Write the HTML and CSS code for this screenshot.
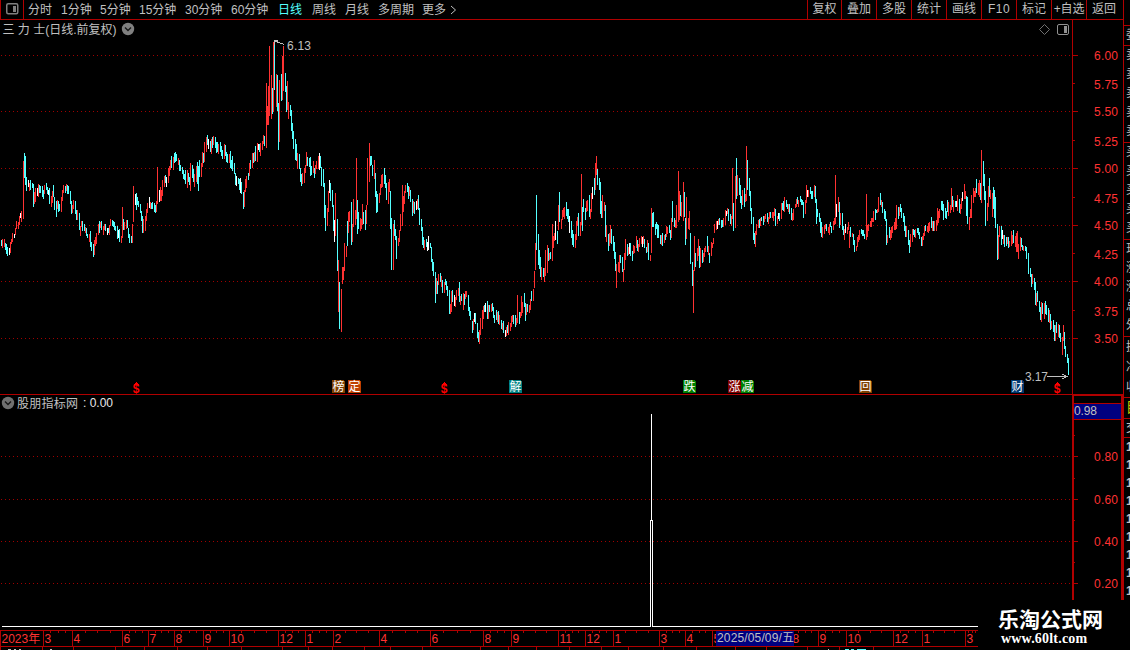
FILE: index.html
```html
<!DOCTYPE html>
<html lang="zh-CN">
<head>
<meta charset="utf-8">
<title>三力士 日线</title>
<link rel="stylesheet" href="styles.css">
</head>
<body>
<div class="terminal">
  <main class="workspace">
    <nav class="toolbar">
      <span class="pane-toggle"><svg width="13" height="12" viewBox="0 0 13 12"><rect x=".75" y=".75" width="11" height="10" rx="1.5" fill="none" stroke="#808080" stroke-width="1.5"/><rect x="7" y="3" width="3" height="6" fill="#808080"/></svg></span>
      <div class="periods">
        <span>分时</span><span>1分钟</span><span>5分钟</span><span>15分钟</span><span>30分钟</span><span>60分钟</span><span class="active">日线</span><span>周线</span><span>月线</span><span>多周期</span><span>更多</span><svg width="7" height="10" viewBox="0 0 7 10"><path d="M1 1L5.5 5L1 9" fill="none" stroke="#c0c0c0"/></svg>
      </div>
      <div class="actions">
        <span>复权</span><span>叠加</span><span>多股</span><span>统计</span><span>画线</span><span class="latin">F10</span><span>标记</span><span class="tight">+自选</span><span>返回</span>
      </div>
    </nav>
    <svg class="price" width="1123" height="375" viewBox="0 20 1123 375">
      <g id="priceGrid"></g>
      <g id="candles"></g>
      <text class="label" x="2.500" y="34" textLength="114">三 力 士(日线.前复权)</text>
      <g class="smooth"><circle cx="128" cy="29" r="6.200" fill="#808080"/><path d="M125 27.500L128 30.500L131 27.500" class="chev"/>
      <path d="M1044.500 24.500L1049.500 29.500L1044.500 34.500L1039.500 29.500Z" fill="none" stroke="#707070"/>
      <rect x="1057.500" y="24.500" width="11" height="10" rx="1.500" fill="none" stroke="#909090"/><rect x="1064" y="26" width="3" height="7" fill="#909090"/></g>
      <path class="pointer" d="M274 44.500V40.500H278M275 41L284 44.500"/>
      <text class="label" x="287" y="50" textLength="24">6.13</text>
      <path class="pointer" d="M1047 376.500H1067M1062 374L1067 376.500L1062 379"/>
      <text class="label" x="1025" y="381" textLength="23">3.17</text>
      <g id="badges"></g>
      <path class="rule" d="M0 394.500H1123M1072.500 20V395"/>
    </svg>
    <svg class="indicator" width="1123" height="235" viewBox="0 395 1123 235">
      <g id="indGrid"></g>
      <g class="smooth"><circle cx="8" cy="403" r="6.200" fill="#707070"/><path d="M5 401.500L8 404.500L11 401.500" class="chev"/></g>
      <text class="label" x="17" y="408" textLength="61">股朋指标网</text>
      <text class="label bright" x="83" y="407" textLength="30">: 0.00</text>
      <path class="signal" d="M2 626.500H650.500V520.500H651.500V414M652.500 520V626.500H1072"/>
      <path class="frame" d="M1073 395H1123M1073 394V630M1122 394V630"/>
      <rect x="1074" y="404" width="47" height="15" fill="#000080"/>
      <path class="rule" d="M1074 403.500H1121M1074 419.500H1121"/>
      <text class="label" x="1074" y="415" textLength="23">0.98</text>
    </svg>
    <svg class="timeline" width="1123" height="20" viewBox="0 630 1123 20">
      <g id="months"></g>
      <rect x="716" y="631" width="78" height="15" fill="#000080"/>
      <text class="label" x="717" y="642" textLength="77">2025/05/09/五</text>
      <path d="M8 649.500H11M14 649.500H16M19 649.500H21M50 649.500H52M828 649.500H829" stroke="#c0c0c0"/>
      <path d="M845 649.500H849M851 649.500H854M857 649.500H866" stroke="#54ffff"/>
    </svg>
  </main>
  <aside class="quote">
    <div class="cell head">委</div>
    <div class="cell five"><b>卖</b><b>卖</b><b>卖</b><b>卖</b><b>卖</b></div>
    <div class="cell five"><b>买</b><b>买</b><b>买</b><b>买</b><b>买</b></div>
    <div class="cell five"><b>现</b><b>涨</b><b>涨</b><b>总</b><b>外</b></div>
    <div class="cell three"><b>换</b><b>净</b><b>收</b></div>
    <div class="cell yellow">目</div>
    <div class="cell deal">交</div>
    <div class="ticks"><b>1</b><b>1</b><b>1</b><b>1</b><b>1</b><b>1</b><b>1</b><b>1</b><b>1</b></div>
  </aside>
  <div class="brand"><span class="brand-name">乐淘公式网</span><span class="brand-url">www.60lt.com</span></div>
</div>
<script src="chart.js"></script>
</body>
</html>
```

FILE: styles.css
```css
* { box-sizing: border-box; }
body { margin: 0; background: #000; overflow: hidden; }
.terminal {
  position: relative;
  display: grid;
  grid-template-columns: 1123px 7px;
  width: 1130px;
  height: 650px;
  overflow: hidden;
  background: #000;
  color: #c0c0c0;
  font: 12px/18px "Liberation Sans", "Noto Sans CJK SC", sans-serif;
}
.workspace { display: flex; flex-direction: column; min-width: 0; }
.workspace > svg { display: block; flex: none; shape-rendering: crispEdges; }
.toolbar { display: flex; height: 20px; border-bottom: 1px solid #b00000; white-space: nowrap; }
.pane-toggle { width: 24px; padding: 3px 0 0 5px; border-left: 1px solid #b00000; border-right: 1px solid #b00000; }
.pane-toggle svg { display: block; }
.periods {
  display: grid;
  grid-template-columns: 33px 39px 39px 46px 46px 47px 34px 33px 33px 44px 28px 8px;
  align-items: center;
  width: 783px;
  padding-left: 4px;
}
.active { color: #54ffff; }
.actions { display: grid; grid-template-columns: 34px repeat(8, 35px); flex: 1; }
.actions span { border-left: 1px solid #b00000; text-align: center; }
.actions .latin { letter-spacing: .5px; }
.actions .tight { letter-spacing: -.2px; }
.label { fill: #c0c0c0; }
.bright { fill: #e8e8e8; }
.axis { fill: #ff3232; }
.month { fill: #ff3232; }
.rule { stroke: #b00000; fill: none; }
.frame { stroke: #b00000; stroke-width: 2; fill: none; }
.grid { stroke: #a00000; stroke-dasharray: 1 3; }
.pointer { stroke: #c0c0c0; fill: none; }
.signal { stroke: #fff; fill: none; }
.smooth { shape-rendering: auto; }
.chev { stroke: #181818; stroke-width: 1.4; fill: none; }
.glyph { fill: #fff; font-size: 12px; text-anchor: middle; }
.dividend { fill: #f00; font-size: 12px; font-weight: 700; text-anchor: middle; }
.quote { border-left: 1px solid #b00000; overflow: hidden; padding-top: 25px; }
.cell { border-top: 1px solid #b00000; padding-left: 2px; overflow: hidden; white-space: nowrap; }
.cell b, .ticks b { display: block; font-weight: 400; }
.head { height: 20px; }
.five { height: 97px; line-height: 19px; }
.three { height: 61px; line-height: 20px; }
.yellow { height: 21px; color: #c8c800; font-size: 14px; }
.deal { height: 20px; border-bottom: 1px solid #b00000; }
.ticks { padding-left: 2px; overflow: hidden; }
.ticks b { height: 18px; font-weight: 700; }
.brand {
  position: absolute;
  left: 978px;
  top: 600px;
  width: 152px;
  height: 50px;
  padding: 6px 0 0 20px;
  background: #000;
  color: #fff;
  font-weight: 700;
}
.brand span { display: block; white-space: nowrap; }
.brand-name { font: 700 21px/25px "Noto Sans CJK SC", sans-serif; }
.brand-url { padding-left: 3px; font: 700 14px/16px "Liberation Serif", serif; letter-spacing: .2px; }
```

FILE: chart.js
```javascript
const NS = "http://www.w3.org/2000/svg";
const add = (id, tag, attrs, text) => {
  const el = document.createElementNS(NS, tag);
  for (const k in attrs) el.setAttribute(k, attrs[k]);
  if (text) el.textContent = text;
  document.getElementById(id).appendChild(el);
};

// Daily ranges: colour + x, high, low; values are thirds of a pixel from each block's origin.
const blocks = [
 {x: 0, y: 130, bars: "c4 330 348,r7 327 354,r13 327 350,c16 339 360,c19 342 372,c22 351 378,w28 354 375,r31 336 369,r34 327 342,r37 309 336,w43 312 324,r46 294 315,r49 273 297,r55 276 297,r58 258 285,w61 249 264,r64 243 276,r70 93 267,c73 69 144,c76 78 165,c79 141 183,w85 150 172,r88 159 183,c91 150 180,c97 159 174,c100 162 231,r103 186 222,r106 174 216,w112 174 198,r115 162 201,c118 165 189,c121 168 189,c127 168 201,c130 180 207,r133 165 192,c139 159 180,c142 171 192,w145 180 195,c148 174 222,r154 198 231,r157 183 219,c160 165 201,c163 201 240,c169 213 261,r172 210 237,c175 213 246,c178 222 243,r184 201 246,r187 180 213,r190 165 189,c196 168 189,r199 162 183,c202 165 192,c205 168 192,c211 183 222,c214 213 252,r217 225 249,r220 210 237,c226 213 252,c229 240 270,r232 240 270,c238 249 300,r241 288 318,r244 273 291,c247 273 303,c253 282 303,r256 291 309,c259 294 318,c262 312 324,r268 312 336,c271 303 351,c274 336 363,c280 342 381,r283 330 375,r286 321 348,r289 309 342,r295 282 315,c298 273 309,r301 276 294,c304 273 300,r310 288 315,r313 282 300,c316 282 303,w322 294 315,c325 294 309,r328 285 315,r331 267 288,c337 270 288,c340 273 291,c343 276 300,c346 288 303,c352 288 327,w355 300 324,c358 297 336,r364 318 339,r367 231 324,c370 267 300,r373 276 300,r379 270 297,c382 270 294,c385 294 324,c388 312 339,c394 318 339,r397 282 339,r400 168 276,w406 192 225,c409 189 240,c412 201 225,c415 213 231,c421 222 249,c424 243 273,c427 258 309,r430 267 309,r436 258 303,r439 237 273,r442 219 249,w448 201 234,r451 216 237,c454 219 237,c457 216 237,c463 219 246,c466 225 249,r469 213 246,r472 111 222,w478 180 216,r481 171 213,r484 180 213,r487 150 198,r493 138 171,c496 135 159,w499 141 171,r505 114 159,r508 108 138,r511 90 120,c514 78 114,r520 81 120,c523 69 99,c526 66 96,c529 72 93,r535 84 105,c538 90 123,c541 105 123,c547 111 132,c550 120 147,c553 132 150,c556 120 162,r562 120 174,c565 129 156,c568 141 165,r571 99 183,c577 105 144,c580 117 156,r583 132 171,r589 108 156,c592 96 162,c595 108 183,c598 90 141,r604 99 141,r607 66 111,c610 69 99,r613 36 96,r619 21 66,c622 15 45,w625 27 57,c631 33 66,r634 27 72,c637 21 54,r640 18 45,c646 21 54,c649 36 69,c652 36 66,r655 42 72,c661 36 66,c664 48 78,c667 60 87,r673 42 87,c676 45 78,c679 66 96,c682 72 99,r688 72 99,c691 63 114,c694 90 117,c697 78 123,c703 99 132,c706 129 165,w709 138 168,c715 144 162,c718 147 180,w721 144 189,c724 156 192,c730 186 237,r733 180 231,r736 147 186,r739 138 174,c745 129 150,r748 99 138,c751 90 117,r757 69 114,c760 69 99,r763 66 96,c766 48 93,r772 39 96,w775 42 60,c778 42 66,r781 39 78,r787 33 60,r790 15 42,c793 18 48"},
 {x: 230, y: 30, bars: "r109 159 354,r112 228 285,r115 168 285,r118 48 258,r124 135 267,c127 174 252,r130 36 246,c133 36 180,r139 132 231,c142 135 243,c145 219 360,r148 150 336,c154 132 213,r157 78 210,r160 48 183,c166 129 186,c169 168 246,r172 153 240,r175 216 267,c181 225 258,c184 240 303,c187 279 327,c190 303 357,c196 327 390,c199 342 393,r202 369 417,c208 372 417,c211 414 456,c214 432 468,r217 429 462,r223 414 459,r226 405 429,r229 366 408,c232 381 408,c238 384 411,c241 381 438,c244 408 435,r250 393 429,c253 414 444,r256 405 432,r259 393 417,r265 378 417,w268 369 420,c271 378 414,c274 411 468,c280 417 471,c283 459 564,c286 525 603,r292 534 588,r295 483 546,w298 450 489,c301 459 513,c307 480 531,c310 525 603,w313 570 636,r316 489 618,c322 567 723,r325 690 846,c328 756 897,r334 777 906,r337 711 762,r340 711 750,r343 639 723,r349 648 681,c352 573 648,r355 546 609,r358 543 576,c364 516 645,r367 582 636,r370 507 591,r376 540 585,r379 384 567,c382 510 612,c385 546 597,r391 564 603,r394 567 597,r397 522 585,c400 546 582,c406 540 600,r409 525 582,r412 384 525,r418 339 456,c421 378 408,c424 378 405,c427 405 438,r433 390 447,c436 429 501,c439 483 549,c442 492 546,r448 489 519,r451 462 495,r454 435 474,r457 432 471,c463 414 462,c466 435 474,c469 459 510,r475 456 522,r478 447 486,c481 483 597,c484 564 720,r490 582 720,c493 570 618,c496 597 630,c499 618 687,r505 624 648,r508 600 636"},
 {x: 400, y: 150, bars: "r1 192 243,r7 105 228,r10 138 186,r13 123 162,r16 105 129,c22 99 126,c25 108 147,r28 111 138,c31 120 156,c37 147 198,r40 153 189,c43 156 192,w49 153 180,r52 147 177,c55 135 180,c58 174 225,c64 207 243,c67 231 285,c70 261 294,r73 270 300,c79 267 291,w82 276 303,w85 258 300,c91 279 294,c94 291 336,c97 327 363,c100 336 378,c106 366 459,r109 384 432,c112 393 432,r115 372 405,c121 369 396,r124 378 411,c127 390 429,r133 396 429,c136 387 405,c139 393 420,c142 408 438,c148 420 492,r151 462 492,r154 423 486,c157 420 456,w163 435 468,r166 441 471,r169 420 450,r175 414 438,c178 396 456,r181 438 465,c184 432 453,r190 429 480,c193 432 465,r196 423 447,r199 423 441,c205 435 483,c208 471 498,c211 483 510,c217 513 549,r220 507 540,w223 489 516,c226 489 522,c232 519 564,c235 546 576,r238 540 582,r241 504 555,r247 480 537,r250 468 507,c253 465 486,w256 459 486,c262 453 507,r265 465 507,c268 465 486,r274 462 486,c277 459 483,c280 471 504,c283 495 519,c289 480 510,r292 486 516,c295 483 522,r298 495 525,c304 510 537,r307 519 540,c310 513 549,w316 540 561,r319 531 558,c322 525 549,r325 516 555,r331 519 543,r334 498 531,r337 495 516,c340 495 522,c346 495 531,r349 504 525,r352 435 519,c358 486 522,r361 486 504,r364 438 498,r367 456 489,c373 429 471,c376 459 513,r379 462 495,c382 462 486,r388 465 489,r391 447 480,c394 423 453,r400 417 453,r403 363 414,r406 279 360,c409 135 300,c415 252 345,c418 300 357,c421 321 381,r424 351 390,c430 354 381,r433 354 396,r436 300 378,r442 285 369,c445 294 333,r448 309 330,c451 306 327,r457 222 333,r460 258 294,r463 249 273,w466 213 270,c472 243 282,r475 165 240,c478 126 216,r484 207 237,r487 180 210,r490 174 201,r493 171 207,c499 156 198,c502 177 207,c505 177 216,w508 198 249,c514 213 264,c517 240 285,c520 252 291,r526 252 294,r529 213 270,r532 201 228,c535 189 258,r541 216 258,r544 72 225,c547 171 243,c550 147 186,c556 174 210,r559 153 186,r562 150 183,c568 135 201,r571 177 207,r574 129 186,w577 111 147,c583 84 135,r586 39 120,r589 18 75,c592 57 105,c598 84 120,c601 96 192,c604 153 204,r607 135 204,r613 156 183,c616 165 261,r619 225 276,c625 252 303,r628 249 288,r631 225 279,c634 237 282,c640 258 303,c643 276 327,c646 306 363,r649 342 414,r655 336 366,r658 315 369,c661 315 339,c667 321 366,r670 357 396,r673 309 360,r676 267 330,c682 282 318,r685 291 315,w688 279 312,c691 279 318,c697 303 333,r700 285 312,r703 288 309,r709 258 294,c712 270 303,r715 282 306,r718 264 291"},
 {x: 640, y: 130, bars: "r4 318 342,w7 321 351,r10 318 342,c13 327 354,c19 351 369,r22 330 366,c25 339 390,r31 375 393,r34 234 369,c37 249 291,c40 246 291,c46 282 315,c49 276 297,c52 282 324,c55 285 324,c61 315 342,r64 315 345,c67 309 348,r73 315 339,c76 312 330,r79 288 321,r82 291 312,c88 285 309,c91 300 330,r94 264 324,c97 213 276,c103 264 291,r106 270 294,r109 225 294,r115 123 276,r118 183 270,c121 195 258,r124 216 261,r130 156 273,c133 186 261,c136 264 345,r139 201 327,r145 264 297,r148 243 300,c151 309 402,c157 396 468,r160 420 549,r163 318 423,c166 369 411,r172 354 393,r175 327 378,c178 348 414,r181 354 411,c187 360 399,r190 369 396,r193 354 381,r196 348 366,c202 318 366,r205 348 375,c208 369 399,r214 336 378,r217 339 354,r220 324 342,r223 282 309,r229 273 300,w232 273 297,r235 267 285,c238 264 285,c244 270 294,c247 270 291,r250 264 291,r256 240 285,w259 243 258,r262 234 252,c265 237 273,c271 252 282,r274 258 288,r277 114 267,c280 219 303,r286 138 294,c289 84 207,r292 135 198,c298 144 195,c301 165 219,c304 198 237,r307 180 225,c313 174 231,r316 192 216,r319 48 213,c322 90 180,c328 144 198,c331 183 243,c334 234 282,c340 261 330,c343 309 342,r346 303 351,r349 282 315,r355 270 294,c358 267 294,r361 264 288,c364 261 273,c370 258 285,r373 258 276,r376 252 267,c382 249 276,r385 261 282,r388 246 267,c391 246 264,r397 246 264,r400 246 273,r403 234 258,c406 237 288,r412 258 282,w415 249 267,c418 249 273,r424 219 267,c427 219 240,c430 213 243,r433 201 246,c439 210 231,c442 222 237,r445 222 246,c448 222 252,c454 234 270,r457 249 273,r460 237 270,r466 222 234,r469 207 231,c472 201 222,r475 210 231,c481 198 216,c484 207 225,c487 210 225,c490 216 264,r496 210 252,r499 165 219,w502 180 201,r505 180 201,c511 171 192,c514 183 207,c517 183 207,r523 165 201,c526 168 219,c529 207 282,c532 237 261,c538 249 276,c541 264 309,c544 276 321,r547 291 324,r553 285 312,r556 282 297,c559 282 303,r565 291 309,r568 282 315,c571 276 291,c574 288 309,r580 273 300,r583 264 285,r586 135 282,w589 222 261,r595 201 246,c598 216 294,r601 249 285,c607 249 300,c610 288 315,r613 297 330,w616 282 309,r622 291 312,r625 276 300,r628 303 354,c631 291 321,r637 309 321,c640 312 345,c643 330 366,r649 348 363,r652 321 351,r655 315 336,r658 300 330"},
 {x: 860, y: 130, bars: "c4 297 312,c7 300 318,c10 300 318,c13 312 327,r19 192 330,r22 285 321,r25 282 303,r31 273 291,r34 264 291,r37 264 276,r40 243 276,c46 237 270,c49 240 249,r52 237 249,r55 201 246,c61 189 225,r64 210 231,c67 216 249,c73 237 267,c76 243 273,c79 267 345,r82 315 339,c88 291 324,r91 300 330,r94 291 324,r97 288 309,r103 276 300,r106 264 300,r109 225 297,c115 231 267,r118 231 258,c121 222 246,c124 234 264,c130 249 276,c133 258 303,c136 288 321,r139 288 321,c145 300 345,c148 330 369,r151 312 351,r157 297 336,c160 297 315,c163 300 321,r166 297 324,c172 294 309,c175 294 315,c178 306 327,c184 321 348,r187 318 348,r190 309 330,r193 288 318,c196 285 303,r202 288 306,r205 279 309,r208 276 303,c214 261 294,r217 273 303,c220 273 303,r223 273 303,r229 270 303,r232 234 285,r235 243 279,r238 237 264,c244 213 240,c247 213 243,c250 222 270,c256 234 264,c259 243 267,c262 210 246,r265 216 258,r271 225 249,r274 174 240,c277 198 231,r280 210 246,c286 213 231,w289 213 231,r292 195 243,c298 207 249,r301 222 252,r304 204 237,w307 186 213,r313 162 207,r316 183 207,c319 198 258,c322 201 282,r328 261 300,r331 237 264,r334 195 264,r340 174 219,r343 183 201,r346 174 201,c349 147 189,r355 159 195,r358 150 201,c361 159 210,r364 60 219,c370 93 168,c373 132 210,c376 183 288,r382 219 273,r385 168 231,c388 144 201,r391 180 207,r397 189 261,c400 171 237,c403 180 264,c406 201 294,c412 282 390,r415 315 387,r418 288 321,c424 288 345,w427 300 327,r430 315 342,c433 315 351,c439 321 348,r442 321 342,c445 321 354,r448 333 351,r454 303 348,r457 315 342,c460 300 339,r466 318 351,r469 309 366,r472 303 366,r475 342 387,r481 321 363,c484 324 351,c487 345 360,r490 348 363,c496 348 363,c499 351 387,c505 369 432,c511 414 441,c514 432 471,r517 432 462,c523 444 480,c526 456 525,r529 489 528,c532 483 516,c538 513 546,c541 531 570,r544 516 576,c547 519 552,r553 519 567,c556 513 552,c559 525 555,c565 534 576,r568 540 579,c571 552 600,r574 573 597,c580 570 606,c583 585 633,r586 585 633,c589 576 609,r595 582 621,c598 585 624,c601 609 636,r607 621 675,r610 585 633,c613 606 657,c616 648 681,c622 672 699,c625 684 735"}
];
const tint = {r: "#ff3232", c: "#54ffff", w: "#fff"};
const paths = {r: "", c: "", w: ""};
for (const b of blocks) for (const bar of b.bars.split(",")) {
  const [x, hi, lo] = bar.slice(1).split(" ").map(Number);
  paths[bar[0]] += `M${b.x + Math.floor(x / 3) + .5} ${b.y + Math.round(hi / 3)}V${b.y + Math.round(lo / 3)}`;
}
for (const k in paths) add("candles", "path", {d: paths[k], stroke: tint[k]});

// Price scale: value, tick row, text baseline
[["6.00",55,60],["5.75",83,89],["5.50",111,116],["5.25",140,146],["5.00",168,173],["4.75",197,203],["4.50",225,230],["4.25",253,259],["4.00",281,286],["3.75",310,316],["3.50",338,343]].forEach(([v, y, base], i) => {
  if (i % 2 === 0) add("priceGrid", "path", {class: "grid", d: `M1 ${y + .5}H1072`});
  add("priceGrid", "path", {class: "rule", d: `M1073 ${y + .5}H${i % 2 ? 1075 : 1078}`});
  add("priceGrid", "text", {class: "axis", x: 1094, y: base, textLength: 24}, v);
});
[["0.80",456],["0.60",499],["0.40",541],["0.20",583]].forEach(([v, y]) => {
  add("indGrid", "path", {class: "grid", d: `M1 ${y + .5}H1072`});
  add("indGrid", "path", {class: "rule", d: `M1074 ${y + .5}H1078M1074 ${y - 20.5}H1075`});
  add("indGrid", "text", {class: "axis", x: 1094, y: y + 5, textLength: 24}, v);
});

[["榜",332,"#804000"],["定",348,"#c04000"],["解",509,"#008080"],["跌",683,"#008000"],["涨",728,"#800000"],["减",741,"#008000"],["回",859,"#804000"],["财",1011,"#003870"]].forEach(([t, x, fill]) => {
  add("badges", "path", {d: `M${x} 380H${x + 11}L${x + 13} 382V393H${x}Z`, fill});
  add("badges", "text", {class: "glyph", x: x + 6.5, y: 391}, t);
});
[136, 444, 1057].forEach(x => {
  add("badges", "path", {d: `M${x - 3} 385L${x} 382L${x + 3} 385Z`, fill: "#f00"});
  add("badges", "text", {class: "dividend", x, y: 393}, "$");
});

const months = [[0,"2023年"],[43,"3"],[72,"4"],[122,"6"],[148,"7"],[174,"8"],[203,"9"],[229,"10"],[278,"12"],[305,"1"],[333,"2"],[379,"4"],[430,"6"],[483,"8"],[511,"9"],[558,"11"],[585,"12"],[613,"1"],[659,"3"],[685,"4"],[712,"5"],[791,"8"],[818,"9"],[846,"10"],[893,"12"],[922,"1"],[965,"3"]];
let rule = "M0 630.5H1123M0 646.5H1123";
months.forEach(([x, t], i) => {
  rule += `M${x + .5} 631V646`;
  const end = i + 1 < months.length ? months[i + 1][0] : 978;
  if (i) for (let k = 1; k < 4; k++) rule += `M${Math.round(x + (end - x) * k / 4) + .5} 631V633`;
  add("months", "text", {class: "month", x: x + 1.5, y: 643}, t);
});
[0,42,73,115,144,177,207,241,282,308,332,364,390,422,480,508,536,569,601,628,663,696,735,766,807,839,873].forEach(x => rule += `M${x + .5} 647V650`);
add("months", "path", {class: "rule", d: rule});
```
